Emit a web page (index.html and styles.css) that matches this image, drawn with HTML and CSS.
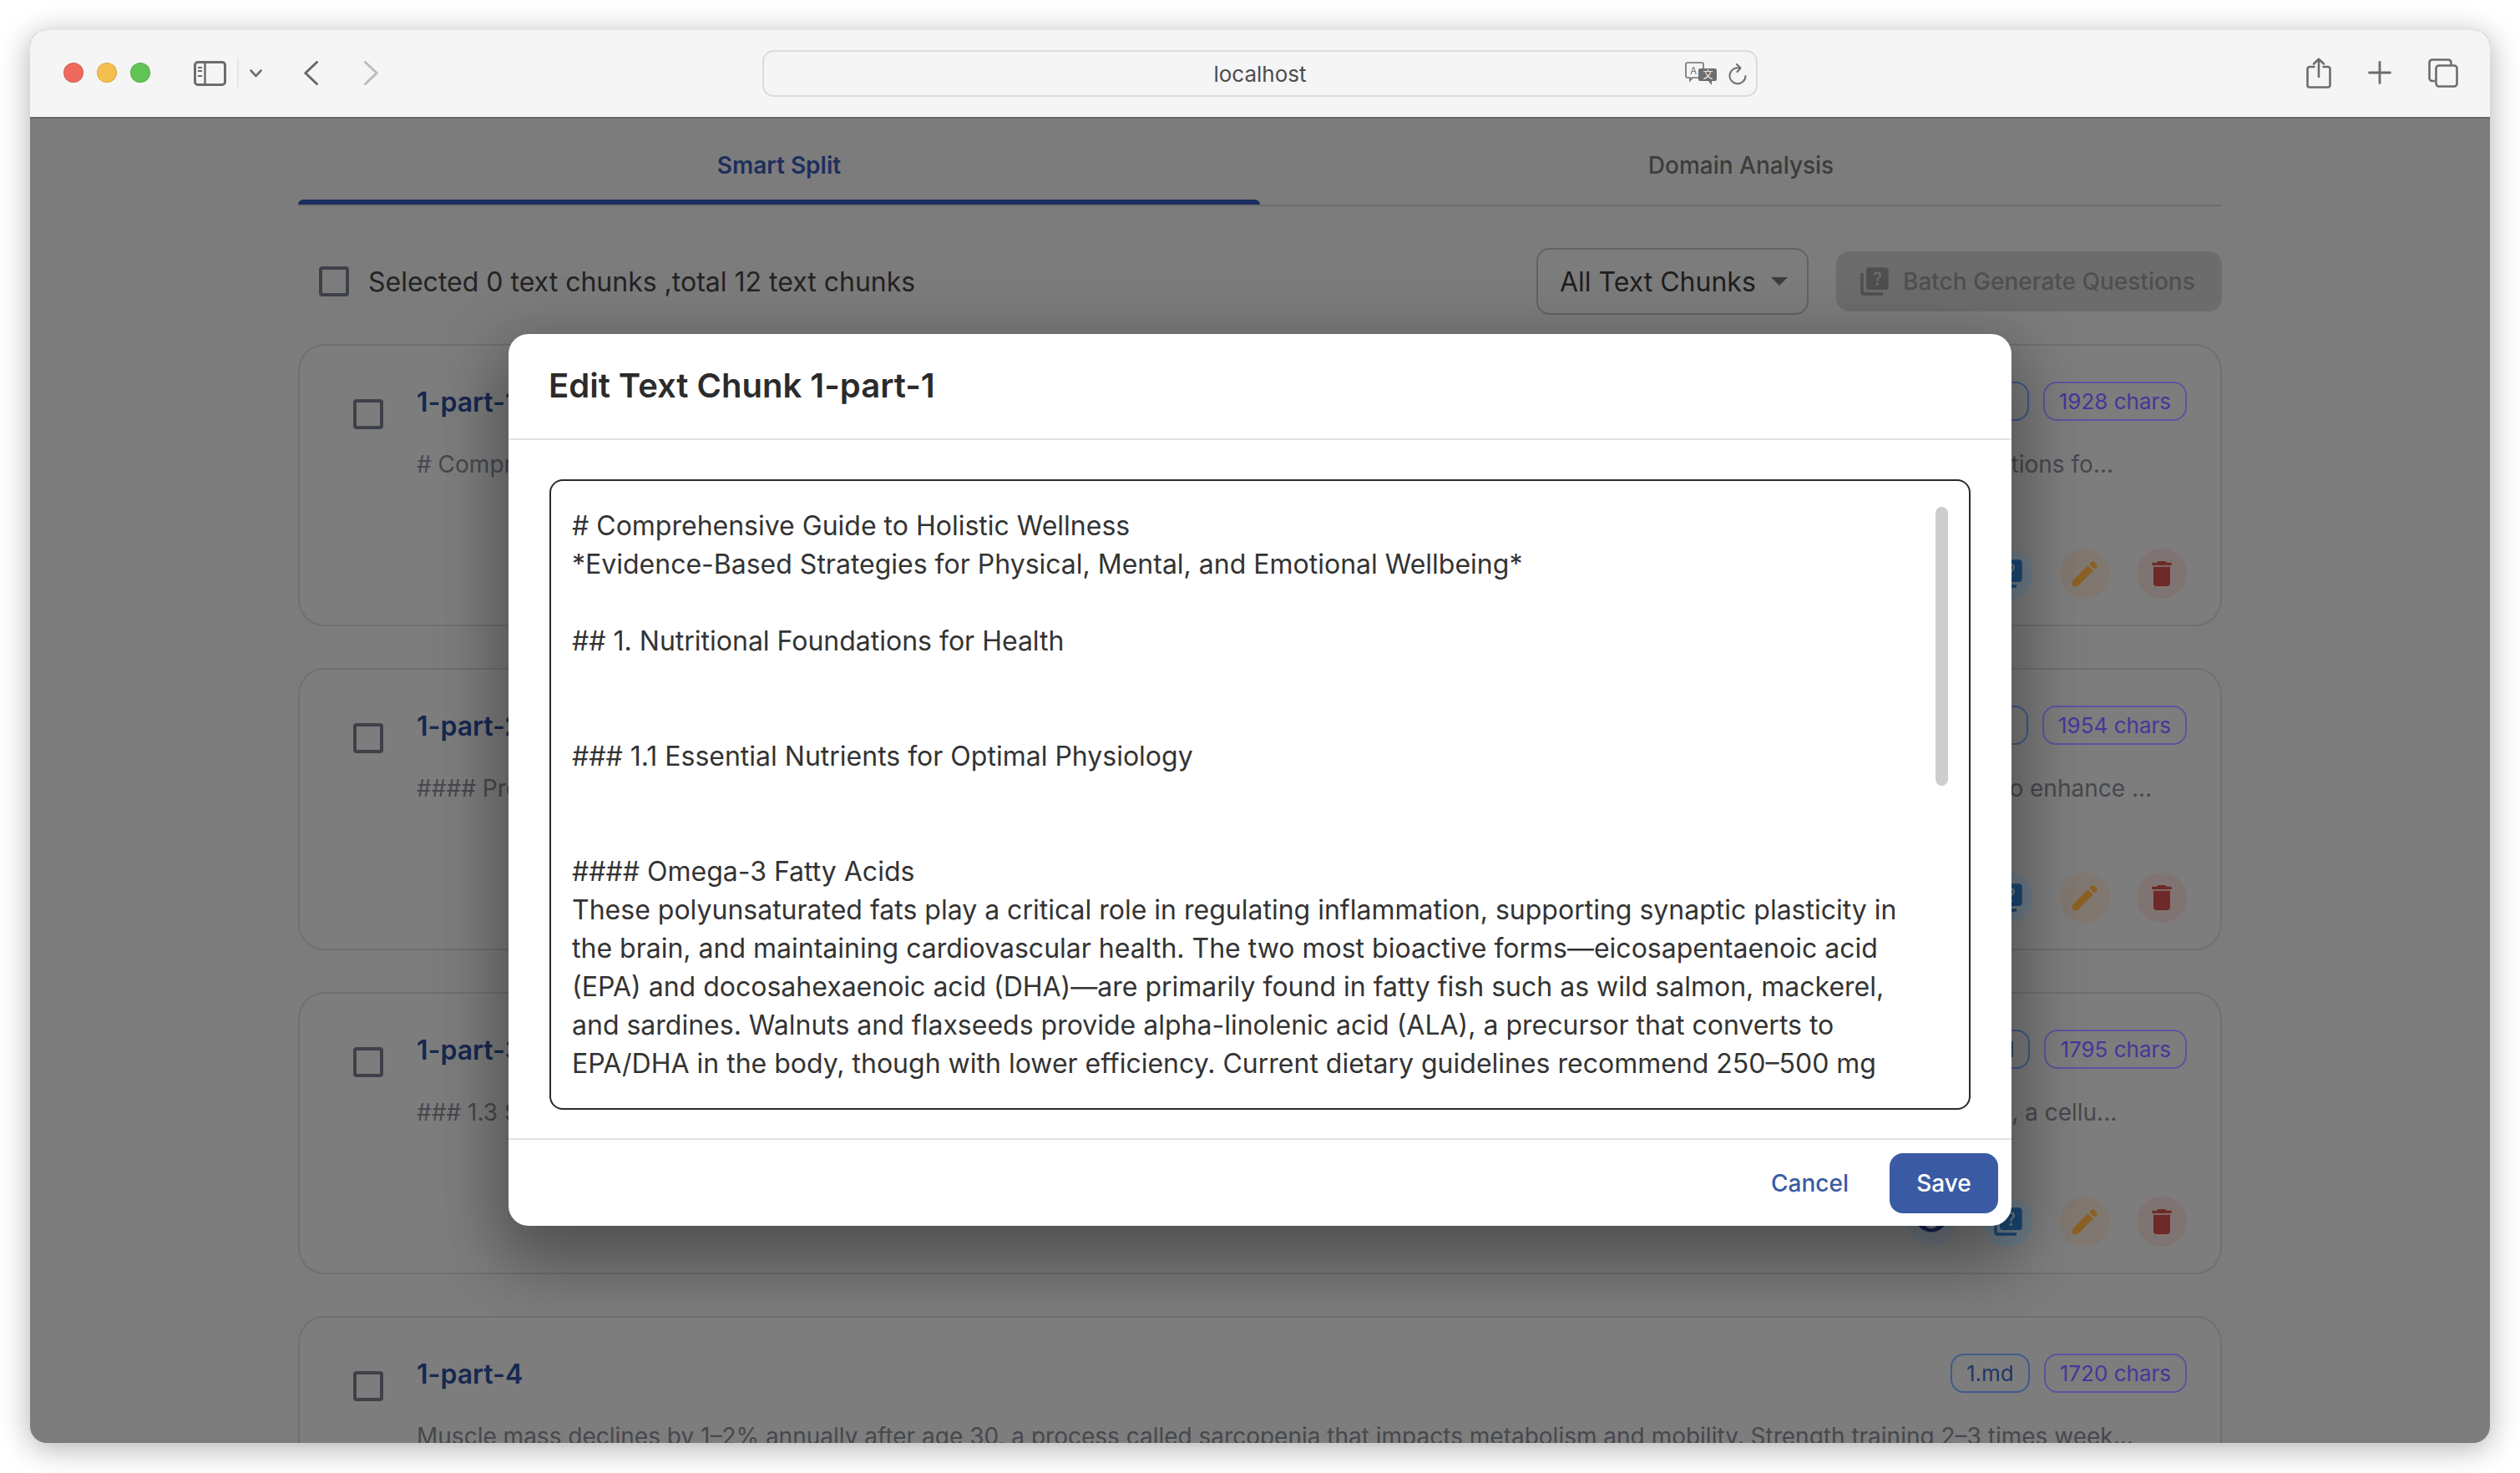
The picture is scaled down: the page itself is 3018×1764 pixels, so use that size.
FILE: index.html
```html
<!DOCTYPE html>
<html lang="en">
<head>
    <meta charset="UTF-8">
    <title>Edit Text Chunk</title>
    <link rel="stylesheet" href="styles.css">
</head>
<body>
    <div class="window">
        <header class="titlebar">
            <div class="lights">
                <span class="light red"></span>
                <span class="light yellow"></span>
                <span class="light green"></span>
            </div>
            <svg class="tb-sidebar" width="39" height="30" viewBox="0 0 39 30" fill="none" stroke="#6c6c6c" stroke-width="3">
                <rect x="1.5" y="1.5" width="36" height="27" rx="3.5"/>
                <path d="M13.5 1.5v27" stroke-width="2.5"/>
                <path d="M5 8h5M5 12h5M5 18h5" stroke-width="2"/>
            </svg>
            <span class="tb-divider"></span>
            <svg class="tb-chevron" width="15" height="10" viewBox="0 0 15 10" fill="none" stroke="#707070" stroke-width="2.6" stroke-linecap="round" stroke-linejoin="round">
                <path d="M1.5 1.5 7.5 8l6-6.500"/>
            </svg>
            <svg class="tb-back" width="17" height="29" viewBox="0 0 17 29" fill="none" stroke="#686868" stroke-width="3" stroke-linecap="round" stroke-linejoin="round">
                <path d="M15.500 1.500 1.800 14.500l13.700 13"/>
            </svg>
            <svg class="tb-forward" width="17" height="29" viewBox="0 0 17 29" fill="none" stroke="#bcbcbc" stroke-width="3" stroke-linecap="round" stroke-linejoin="round">
                <path d="M1.500 1.500 15.200 14.500l-13.700 13"/>
            </svg>
            <div class="urlbar">
                <span class="url-text">localhost</span>
                <svg class="url-translate" width="38" height="28" viewBox="0 0 38 28">
                    <path d="M3 1h17a2 2 0 0 1 2 2v14a2 2 0 0 1-2 2H9l-3 3.500V19H3a2 2 0 0 1-2-2V3a2 2 0 0 1 2-2z" fill="#f5f5f5" stroke="#6e6e6e" stroke-width="1.600"/>
                    <text x="6.500" y="15" class="url-glyph" fill="#6e6e6e">A</text>
                    <path d="M18 8h18a2 2 0 0 1 2 2v11a2 2 0 0 1-2 2h-4v5l-4-5H18a2 2 0 0 1-2-2V10a2 2 0 0 1 2-2z" fill="#6e6e6e"/>
                    <text x="21.500" y="20" class="url-glyph" fill="#f5f5f5">文</text>
                </svg>
                <svg class="url-reload" width="22" height="26" viewBox="0 0 22 26" fill="none" stroke="#6e6e6e" stroke-width="2" stroke-linecap="round" stroke-linejoin="round">
                    <path d="M13 5.500a9.500 9.500 0 1 0 7.500 9.500"/>
                    <path d="M10 1l4.500 4.500L10.500 10"/>
                </svg>
            </div>
            <div class="tb-right">
                <svg width="30" height="37" viewBox="0 0 30 37" fill="none" stroke="#6c6c6c" stroke-width="2.600" stroke-linecap="round" stroke-linejoin="round">
                    <path d="M9.500 11H4a2.500 2.500 0 0 0-2.500 2.500V33A2.500 2.500 0 0 0 4 35.500h22a2.500 2.500 0 0 0 2.500-2.500V13.500A2.500 2.500 0 0 0 26 11h-5.500"/>
                    <path d="M15 23V2M9 7.500 15 1.800l6 5.700"/>
                </svg>
                <svg width="28" height="28" viewBox="0 0 28 28" fill="none" stroke="#6c6c6c" stroke-width="2.800" stroke-linecap="round">
                    <path d="M14 1.500v25M1.500 14h25"/>
                </svg>
                <svg width="36" height="35" viewBox="0 0 36 35" fill="none" stroke="#6c6c6c" stroke-width="2.600">
                    <path d="M8 27H5a3.500 3.500 0 0 1-3.500-3.500V5A3.500 3.500 0 0 1 5 1.500h19A3.500 3.500 0 0 1 27.500 5v3"/>
                    <rect x="9.500" y="8.500" width="25" height="25" rx="3.500"/>
                </svg>
            </div>
        </header>

        <main class="page">
            <div class="tabs">
                <div class="tab active">Smart Split</div>
                <div class="tab">Domain Analysis</div>
            </div>

            <div class="toolbar">
                <span class="check"></span>
                <span class="selected-info">Selected 0 text chunks ,total 12 text chunks</span>
                <div class="select">All Text Chunks <span class="select-arrow"></span></div>
                <div class="batch-btn">
                    <svg width="40" height="40" viewBox="0 0 24 24" fill="#4f4f4f"><use href="#icon-quiz"/></svg>
                    Batch Generate Questions
                </div>
            </div>

            <div class="chunk-list">
                <article class="chunk">
                    <span class="check"></span>
                    <div class="chunk-body">
                        <div class="chunk-head">
                            <span class="chunk-title">1-part-1</span>
                            <span class="chip file">1.md</span>
                            <span class="chip size">1928 chars</span>
                        </div>
                        <p class="chunk-preview"># Comprehensive Guide to Holistic Wellness *Evidence-Based Strategies for Physical, Mental, and Emotional Wellbeing* ## 1. Nutritional Foundations fo...</p>
                        <div class="chunk-actions">
                            <span class="act view"><svg viewBox="0 0 24 24"><use href="#icon-eye"/></svg></span>
                            <span class="act quiz"><svg viewBox="0 0 24 24"><use href="#icon-quiz"/></svg></span>
                            <span class="act edit"><svg viewBox="0 0 24 24"><use href="#icon-edit"/></svg></span>
                            <span class="act del"><svg viewBox="0 0 24 24"><use href="#icon-delete"/></svg></span>
                        </div>
                    </div>
                </article>

                <article class="chunk">
                    <span class="check"></span>
                    <div class="chunk-body">
                        <div class="chunk-head">
                            <span class="chunk-title">1-part-2</span>
                            <span class="chip file">1.md</span>
                            <span class="chip size">1954 chars</span>
                        </div>
                        <p class="chunk-preview">#### Probiotics and Gut Health Fermented foods such as yogurt, kefir and kimchi supply live cultures, and fiber-rich plants all act as prebiotics to enhance ...</p>
                        <div class="chunk-actions">
                            <span class="act view"><svg viewBox="0 0 24 24"><use href="#icon-eye"/></svg></span>
                            <span class="act quiz"><svg viewBox="0 0 24 24"><use href="#icon-quiz"/></svg></span>
                            <span class="act edit"><svg viewBox="0 0 24 24"><use href="#icon-edit"/></svg></span>
                            <span class="act del"><svg viewBox="0 0 24 24"><use href="#icon-delete"/></svg></span>
                        </div>
                    </div>
                </article>

                <article class="chunk">
                    <span class="check"></span>
                    <div class="chunk-body">
                        <div class="chunk-head">
                            <span class="chunk-title">1-part-3</span>
                            <span class="chip file">1.md</span>
                            <span class="chip size">1795 chars</span>
                        </div>
                        <p class="chunk-preview">### 1.3 Sleep and Recovery: Deep sleep supports tissue repair and memory, and regular bedtimes keep the circadian rhythm through autophagy, a cellu...</p>
                        <div class="chunk-actions">
                            <span class="act view"><svg viewBox="0 0 24 24"><use href="#icon-eye"/></svg></span>
                            <span class="act quiz"><svg viewBox="0 0 24 24"><use href="#icon-quiz"/></svg></span>
                            <span class="act edit"><svg viewBox="0 0 24 24"><use href="#icon-edit"/></svg></span>
                            <span class="act del"><svg viewBox="0 0 24 24"><use href="#icon-delete"/></svg></span>
                        </div>
                    </div>
                </article>

                <article class="chunk">
                    <span class="check"></span>
                    <div class="chunk-body">
                        <div class="chunk-head">
                            <span class="chunk-title">1-part-4</span>
                            <span class="chip file">1.md</span>
                            <span class="chip size">1720 chars</span>
                        </div>
                        <p class="chunk-preview">Muscle mass declines by 1–2% annually after age 30, a process called sarcopenia that impacts metabolism and mobility. Strength training 2–3 times week...</p>
                    </div>
                </article>
            </div>
        </main>

        <div class="modal-layer">
            <section class="modal">
                <h2 class="modal-title">Edit Text Chunk 1-part-1</h2>
                <div class="modal-body">
                    <div class="editor">
                        <textarea readonly>
# Comprehensive Guide to Holistic Wellness
*Evidence-Based Strategies for Physical, Mental, and Emotional Wellbeing*

## 1. Nutritional Foundations for Health


### 1.1 Essential Nutrients for Optimal Physiology


#### Omega-3 Fatty Acids
These polyunsaturated fats play a critical role in regulating inflammation, supporting synaptic plasticity in the brain, and maintaining cardiovascular health. The two most bioactive forms—eicosapentaenoic acid (EPA) and docosahexaenoic acid (DHA)—are primarily found in fatty fish such as wild salmon, mackerel, and sardines. Walnuts and flaxseeds provide alpha-linolenic acid (ALA), a precursor that converts to EPA/DHA in the body, though with lower efficiency. Current dietary guidelines recommend 250–500 mg of combined EPA and DHA daily.</textarea>
                        <span class="scroll-thumb"></span>
                    </div>
                </div>
                <footer class="modal-footer">
                    <button class="btn-text">Cancel</button>
                    <button class="btn-save">Save</button>
                </footer>
            </section>
        </div>
    </div>

    <svg class="icon-defs" width="0" height="0">
        <defs>
            <path id="icon-eye" d="M12 4.500C7 4.500 2.730 7.610 1 12c1.730 4.390 6 7.500 11 7.500s9.270-3.110 11-7.500c-1.730-4.390-6-7.500-11-7.500zM12 17c-2.760 0-5-2.240-5-5s2.240-5 5-5 5 2.240 5 5-2.240 5-5 5zm0-8c-1.660 0-3 1.340-3 3s1.340 3 3 3 3-1.340 3-3-1.340-3-3-3z"/>
            <path id="icon-quiz" d="M4 6H2v14c0 1.100.9 2 2 2h14v-2H4V6zm16-4H8c-1.100 0-2 .9-2 2v12c0 1.100.9 2 2 2h12c1.100 0 2-.9 2-2V4c0-1.100-.9-2-2-2zm-5.990 13c-.59 0-1.050-.47-1.050-1.050 0-.59.47-1.040 1.050-1.040.59 0 1.040.45 1.040 1.040-.01.58-.45 1.050-1.040 1.050zm2.500-6.170c-.63.93-1.230 1.210-1.560 1.810-.13.24-.18.4-.18 1.180h-1.520c0-.41-.06-1.080.26-1.650.41-.73 1.180-1.160 1.630-1.800.48-.68.21-1.940-1.140-1.940-.88 0-1.320.67-1.500 1.230l-1.370-.57C11.510 5.960 12.520 5 13.990 5c1.230 0 2.080.56 2.510 1.260.37.61.58 1.730.01 2.570z"/>
            <path id="icon-edit" d="M3 17.250V21h3.750L17.810 9.940l-3.750-3.750L3 17.250zM20.710 7.040c.39-.39.39-1.020 0-1.410l-2.340-2.340a.9959.9959 0 0 0-1.410 0l-1.830 1.830 3.750 3.750 1.830-1.830z"/>
            <path id="icon-delete" d="M6 19c0 1.100.9 2 2 2h8c1.100 0 2-.9 2-2V7H6v12zM19 4h-3.500l-1-1h-5l-1 1H5v2h14V4z"/>
        </defs>
    </svg>
</body>
</html>
```

FILE: styles.css
```css
* {
    margin: 0;
    padding: 0;
    box-sizing: border-box;
}

html, body {
    height: 100%;
    overflow: hidden;
}

body {
    font-family: 'Inter', 'Liberation Sans', sans-serif;
    background: #fff;
    padding: 36px;
}

.icon-defs {
    position: absolute;
}

.window {
    position: relative;
    height: 1692px;
    border-radius: 20px;
    overflow: hidden;
    box-shadow: 0 6px 36px rgba(0, 0, 0, 0.32);
    display: flex;
    flex-direction: column;
    background: #7c7c7c;
}

/* browser chrome */
.titlebar {
    height: 106px;
    flex: none;
    display: flex;
    align-items: center;
    background: #f5f5f5;
    border-bottom: 2px solid #666;
    padding-left: 40px;
    padding-bottom: 2px;
}

.lights {
    display: flex;
    gap: 16px;
}

.light {
    width: 24px;
    height: 24px;
    border-radius: 50%;
    border: 1px solid rgba(0, 0, 0, 0.12);
}

.red { background: #ee6a5f; }
.yellow { background: #f5bf4f; }
.green { background: #61c454; }

.tb-sidebar {
    margin-left: 52px;
    margin-top: 2px;
}

.tb-divider {
    width: 2px;
    height: 36px;
    margin-left: 13px;
    background: #e6e6e6;
}

.tb-chevron {
    margin-left: 13px;
    margin-top: 2px;
}

.tb-back {
    margin-left: 50px;
}

.tb-forward {
    margin-left: 55px;
}

.urlbar {
    position: relative;
    width: 1192px;
    height: 56px;
    margin-left: 460px;
    margin-top: 2px;
    display: flex;
    align-items: center;
    justify-content: center;
    gap: 0;
    border: 2px solid #dcdcdc;
    border-radius: 14px;
}

.url-text {
    font-size: 26px;
    color: #4c4c4c;
}

.url-glyph {
    font-family: 'Noto Sans CJK SC', 'Inter', sans-serif;
    font-size: 12px;
}

.url-translate {
    position: absolute;
    right: 47px;
    top: 12px;
}

.url-reload {
    position: absolute;
    right: 11px;
    top: 14px;
}

.tb-right {
    display: flex;
    align-items: center;
    gap: 44px;
    margin-left: 657px;
}

/* page behind the dialog, already dimmed */
.page {
    flex: 1;
    min-height: 0;
    overflow: hidden;
    padding: 7px 321px 0;
}

.tabs {
    display: flex;
    border-bottom: 2px solid #6e6e6e;
}

.tab {
    position: relative;
    flex: 1;
    height: 96px;
    display: flex;
    align-items: center;
    justify-content: center;
    padding-top: 2px;
    font-size: 28px;
    font-weight: 500;
    color: #3c3c3c;
}

.tab.active {
    color: #1c2e5c;
    font-weight: 600;
}

.tab.active::after {
    content: '';
    position: absolute;
    left: 0;
    right: 0;
    bottom: 0;
    height: 6px;
    border-radius: 6px 6px 0 0;
    background: #1c2f5e;
}

.toolbar {
    display: flex;
    align-items: center;
    margin-top: 50px;
    padding-left: 25px;
}

.check {
    flex: none;
    width: 36px;
    height: 36px;
    border: 4px solid #3e4148;
    border-radius: 4px;
}

.selected-info {
    margin-left: 23px;
    font-size: 32px;
    color: #232323;
}

.select {
    margin-left: auto;
    width: 326px;
    height: 80px;
    display: flex;
    align-items: center;
    padding-left: 26px;
    gap: 18px;
    font-size: 32px;
    color: #1e1e1e;
    border: 2px solid #626262;
    border-radius: 16px;
}

.select-arrow {
    width: 0;
    height: 0;
    border-left: 10px solid transparent;
    border-right: 10px solid transparent;
    border-top: 10px solid #3c3c3c;
}

.batch-btn {
    margin-left: 33px;
    width: 462px;
    height: 72px;
    display: flex;
    align-items: center;
    padding-left: 26px;
    gap: 14px;
    font-size: 28px;
    font-weight: 500;
    color: #4f4f4f;
    background: #6c6c6c;
    border-radius: 16px;
}

.chunk-list {
    display: flex;
    flex-direction: column;
    gap: 50px;
    margin-top: 35px;
}

.chunk {
    flex: none;
    height: 338px;
    display: flex;
    gap: 40px;
    padding: 43px 40px 31px 64px;
    border: 2px solid #707070;
    border-radius: 32px;
    background: #7d7d7d;
}

.chunk .check {
    margin-top: 21px;
}

.chunk-body {
    flex: 1;
    min-width: 0;
    display: flex;
    flex-direction: column;
}

.chunk-head {
    display: flex;
    align-items: center;
    gap: 17px;
}

.chunk-title {
    margin-right: auto;
    padding-top: 2px;
    font-size: 32px;
    font-weight: 600;
    color: #152850;
}

.chip {
    height: 47px;
    display: flex;
    align-items: center;
    padding: 0 17px;
    font-size: 26px;
    border: 2px solid;
    border-radius: 16px;
}

.chip.file {
    color: #1f3568;
    border-color: #3f5b8d;
}

.chip.size {
    color: #46369a;
    border-color: #62509f;
}

.chunk-preview {
    margin-top: 32px;
    font-size: 28px;
    line-height: 40px;
    white-space: nowrap;
    color: #46484d;
}

.chunk-actions {
    margin-top: auto;
    display: flex;
    justify-content: flex-end;
    gap: 32px;
}

.act {
    width: 60px;
    height: 60px;
    display: flex;
    align-items: center;
    justify-content: center;
    border-radius: 50%;
}

.act svg {
    width: 40px;
    height: 40px;
}

.act.view { background: #727a82; fill: #16244f; }
.act.quiz { background: #6f7d88; fill: #1a4a76; }
.act.edit { background: #807870; fill: #8c5f23; }
.act.del { background: #807472; fill: #6e2a28; }

/* dialog */
.modal-layer {
    position: absolute;
    top: 104px;
    left: 0;
    right: 0;
    bottom: 0;
    display: flex;
    align-items: center;
    justify-content: center;
}

.modal {
    width: 1800px;
    height: 1068px;
    display: flex;
    flex-direction: column;
    background: #fff;
    border-radius: 24px;
    box-shadow: 0 22px 76px 16px rgba(0, 0, 0, 0.24), 0 48px 76px 6px rgba(0, 0, 0, 0.14);
}

.modal-title {
    flex: none;
    height: 127px;
    display: flex;
    align-items: center;
    padding: 0 48px 2px;
    font-size: 40px;
    font-weight: 600;
    color: #2b2b2b;
    border-bottom: 2px solid #e2e2e2;
}

.modal-body {
    flex: 1;
    min-height: 0;
    padding: 47px 49px 0;
}

.editor {
    position: relative;
    height: 755px;
    padding: 31px 28px 0 25px;
    border: 2px solid #2b2b2b;
    border-radius: 16px;
}

.editor textarea {
    display: block;
    width: 100%;
    height: 690px;
    padding-right: 51px;
    border: none;
    outline: none;
    resize: none;
    overflow: hidden;
    font-family: inherit;
    font-size: 32px;
    line-height: 46px;
    color: #333;
}

.scroll-thumb {
    position: absolute;
    top: 31px;
    right: 25px;
    width: 15px;
    height: 334px;
    border-radius: 8px;
    background: #cdcdcd;
}

.modal-footer {
    flex: none;
    height: 105px;
    display: flex;
    align-items: center;
    justify-content: flex-end;
    gap: 17px;
    padding: 0 16px;
    border-top: 2px solid #e2e2e2;
}

.modal-footer button {
    font-family: inherit;
    font-size: 28px;
    font-weight: 500;
    height: 72px;
    border: none;
    border-radius: 16px;
}

.btn-text {
    padding: 0 32px;
    color: #3a5ba3;
    background: none;
}

.btn-save {
    width: 130px;
    color: #fff;
    background: #3a5ba3;
}
```
